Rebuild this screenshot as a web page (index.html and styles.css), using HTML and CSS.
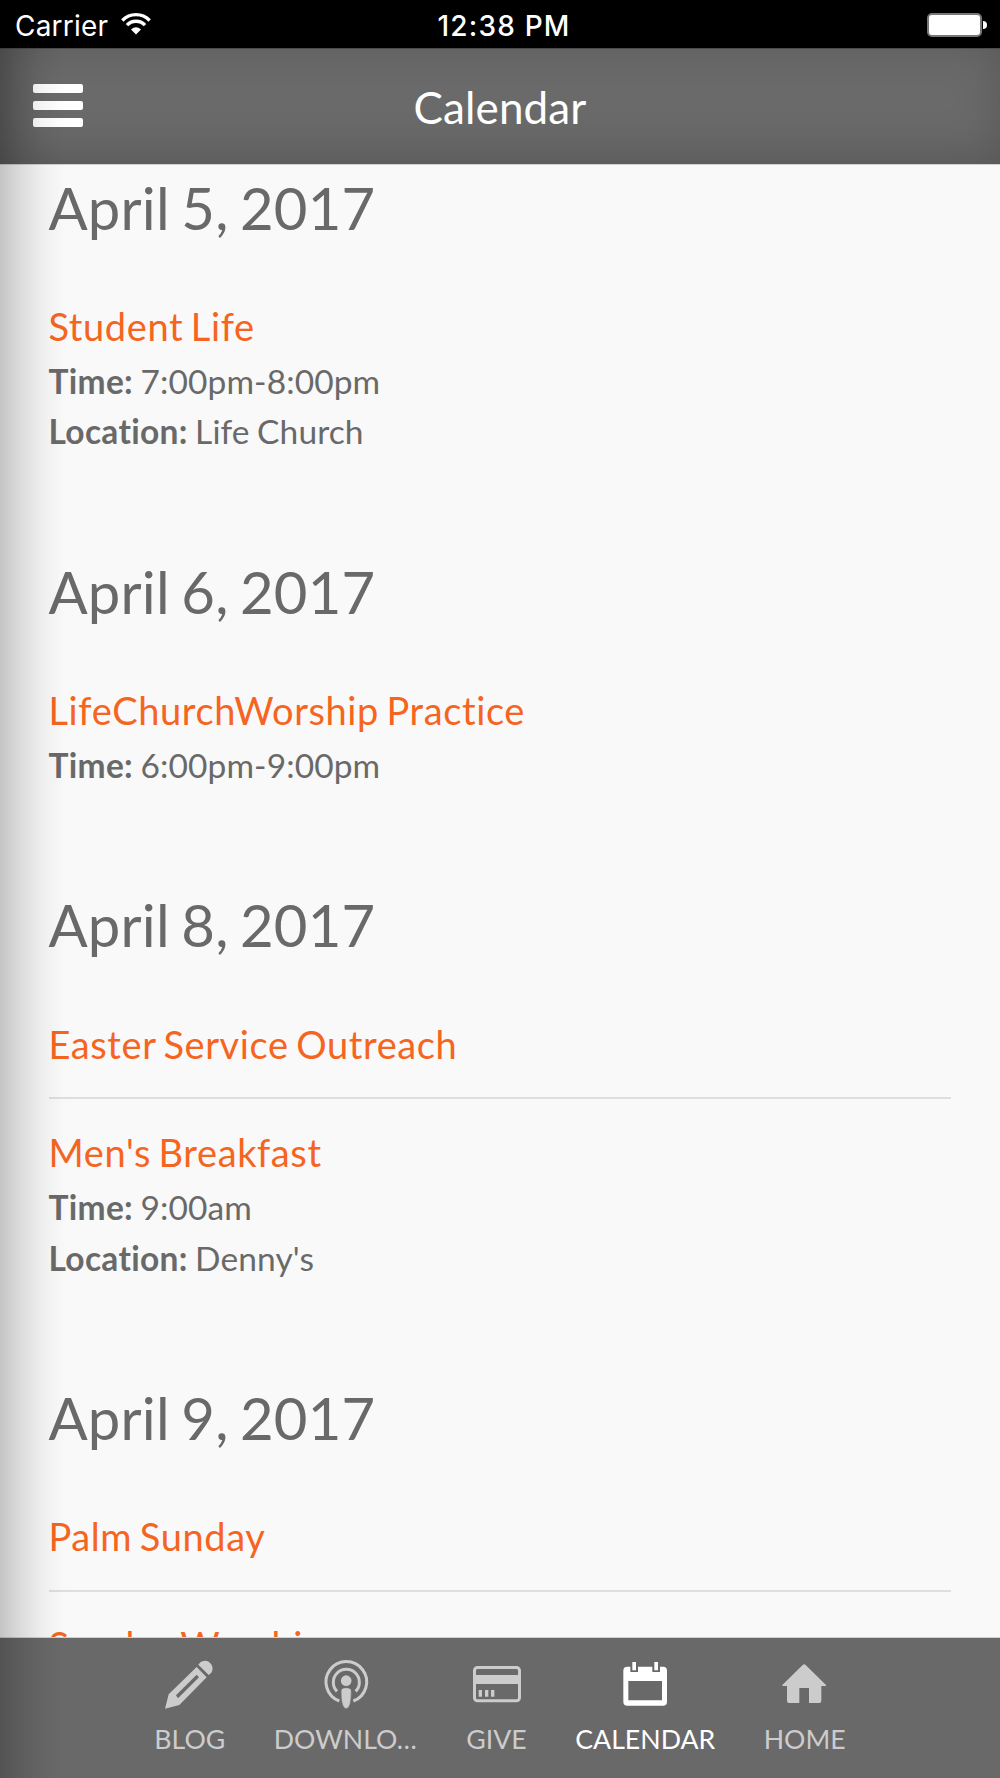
FILE: index.html
```html
<!DOCTYPE html>
<html lang="en">
<head>
    <meta charset="UTF-8">
    <meta name="viewport" content="width=device-width, initial-scale=1.0">
    <title>Calendar</title>
    <link rel="stylesheet" href="styles.css">
</head>
<body>

    <div class="status-bar">
        <div class="carrier">
            <span>Carrier</span>
            <svg class="wifi" viewBox="0 0 90 68">
                <path d="M4 25A57 57 0 0 1 86 25M18 39A37 37 0 0 1 72 39" fill="none" stroke="#fff" stroke-width="10"/>
                <path d="M45 67L30 52Q45 39 60 52Z" fill="#fff"/>
            </svg>
        </div>
        <div class="clock">12:38 PM</div>
        <div class="battery">
            <span class="battery-body"></span>
            <span class="battery-tip"></span>
        </div>
    </div>

    <div class="app">
        <header class="header">
            <div class="menu">
                <span></span>
                <span></span>
                <span></span>
            </div>
            <h1>Calendar</h1>
        </header>

        <main class="content">
            <section class="day">
                <h2>April 5, 2017</h2>
                <div class="event">
                    <h3>Student Life</h3>
                    <p><strong>Time:</strong> 7:00pm-8:00pm</p>
                    <p><strong>Location:</strong> Life Church</p>
                </div>
            </section>

            <section class="day">
                <h2>April 6, 2017</h2>
                <div class="event">
                    <h3>LifeChurchWorship Practice</h3>
                    <p><strong>Time:</strong> 6:00pm-9:00pm</p>
                </div>
            </section>

            <section class="day">
                <h2>April 8, 2017</h2>
                <div class="event">
                    <h3>Easter Service Outreach</h3>
                </div>
                <div class="event">
                    <h3>Men's Breakfast</h3>
                    <p><strong>Time:</strong> 9:00am</p>
                    <p><strong>Location:</strong> Denny's</p>
                </div>
            </section>

            <section class="day">
                <h2>April 9, 2017</h2>
                <div class="event">
                    <h3>Palm Sunday</h3>
                </div>
                <div class="event">
                    <h3>Sunday Worship</h3>
                </div>
            </section>
        </main>

        <nav class="tabs">
            <a class="tab">
                <svg viewBox="0 0 150 150">
                    <path fill-rule="evenodd" d="M0 149L11 106L95 24L125 55L43 138ZM33 109L39 118L102 55L95 47Z"/>
                    <path d="M100 17L106 10A23 23 0 0 1 139 41L131 48Z"/>
                </svg>
                <span>BLOG</span>
            </a>
            <a class="tab">
                <svg viewBox="0 0 150 150">
                    <path class="line" d="M55 126A61 61 0 1 1 97 126M48 97A39 39 0 1 1 104 97"/>
                    <circle cx="75.500" cy="65" r="16"/>
                    <path class="mic" d="M60 96Q60 86 75.500 86Q91 86 91 96Q91 149 75.500 149Q60 149 60 96Z"/>
                </svg>
                <span>DOWNLOADS</span>
            </a>
            <a class="tab">
                <svg viewBox="0 0 150 150">
                    <rect class="line" x="7.500" y="25.500" width="135" height="100" rx="9"/>
                    <path d="M7 48H143V75H7ZM20 93H30V113H20ZM39 93H49V113H39ZM57 93H67V113H57Z"/>
                </svg>
                <span>GIVE</span>
            </a>
            <a class="tab active">
                <svg viewBox="0 0 150 150">
                    <path fill-rule="evenodd" d="M22 23H31V39H54V23H97V39H120V23H129Q141 23 141 35V128Q141 140 129 140H22Q10 140 10 128V35Q10 23 22 23ZM25 66V124H126V66Z"/>
                    <path d="M37 9H48V34H37ZM103 9H114V34H103Z"/>
                </svg>
                <span>CALENDAR</span>
            </a>
            <a class="tab">
                <svg viewBox="0 0 150 150">
                    <path d="M68 18Q72.500 13 77 18L138 78V81H124V126Q124 132 118 132H87V87H58V132H27Q21 132 21 126V81H7V78Z"/>
                </svg>
                <span>HOME</span>
            </a>
        </nav>
    </div>

</body>
</html>
```
FILE: styles.css
```css
* {
    box-sizing: border-box;
}
body {
    font-family: Lato, sans-serif;
    background-color: #f9f9f9;
    color: #696969;
    margin: 0;
    height: 1778px;
    overflow: hidden;
    display: flex;
    flex-direction: column;
}
h1, h2, h3, p {
    margin: 0;
    font-weight: 400;
}

/* status bar */
.status-bar {
    height: 48px;
    flex: none;
    background-color: #000;
    color: #fff;
    font-family: Inter, sans-serif;
    font-size: 28px;
    display: grid;
    grid-template-columns: 1fr auto 1fr;
    align-items: center;
    padding: 3px 13px 0 15px;
}
.carrier {
    display: flex;
    align-items: center;
    gap: 13px;
    letter-spacing: 0.2px;
}
.wifi {
    width: 30px;
    height: 23px;
    margin-top: -4px;
}
.clock {
    font-size: 28px;
    font-weight: 500;
    letter-spacing: 1.2px;
    margin-left: 6px;
}
.battery {
    display: flex;
    align-items: center;
    justify-content: flex-end;
    gap: 1px;
    margin-top: -1px;
}
.battery-body {
    width: 55px;
    height: 24px;
    border: 2px solid #777;
    border-radius: 5px;
    background-color: #fff;
}
.battery-tip {
    width: 4px;
    height: 8px;
    background-color: #fff;
    border-radius: 0 4px 4px 0;
}

/* app */
.app {
    flex: 1;
    min-height: 0;
    position: relative;
    display: flex;
    flex-direction: column;
}
/* shadow cast by the side drawer */
.app::after {
    content: "";
    position: absolute;
    top: 0;
    bottom: 0;
    left: 0;
    width: 66px;
    background: linear-gradient(to right, rgba(0, 0, 0, 0.21), rgba(0, 0, 0, 0.12) 30%, rgba(0, 0, 0, 0.04) 65%, transparent);
}
.header {
    height: 116px;
    flex: none;
    display: grid;
    grid-template-columns: 1fr auto 1fr;
    align-items: center;
    padding: 0 33px;
    background-color: #6a6a6a;
    border-top: 1px solid #4c4c4c;
    box-shadow: inset 0 -8px 46px rgba(0, 0, 0, 0.18), 0 1px 0 #d0d0d0;
    color: #fff;
}
.header h1 {
    font-size: 44px;
    line-height: 56px;
    letter-spacing: 0.1px;
    margin-top: 1px;
}
.menu {
    width: 50px;
    display: flex;
    flex-direction: column;
    gap: 8px;
    margin-top: -2px;
}
.menu span {
    height: 9px;
    border-radius: 2px;
    background-color: #fff;
}

.content {
    flex: 1;
    min-height: 0;
    overflow: hidden;
    padding: 8.6px 49px 0 48.5px;
}
.day {
    margin-bottom: 99.7px;
}
.day h2 {
    font-size: 58px;
    line-height: 70px;
    letter-spacing: 0.2px;
    word-spacing: -3.6px;
    margin-bottom: 57.4px;
}
.event h3 {
    font-size: 38px;
    line-height: 52px;
    letter-spacing: 0.6px;
    word-spacing: -2.7px;
    color: #f5651f;
    margin-bottom: 3.7px;
}
.event h3:last-child {
    margin-bottom: 0;
}
.event p {
    font-size: 33.5px;
    line-height: 50.7px;
    letter-spacing: 0.1px;
    word-spacing: -1.2px;
}
.event strong {
    letter-spacing: 0.3px;
}
.event + .event {
    margin-top: 27.3px;
    padding-top: 27.3px;
    border-top: 2px solid #dedede;
}

/* bottom tabs */
.tabs {
    height: 140px;
    flex: none;
    display: flex;
    justify-content: center;
    gap: 48.5px;
    padding-top: 21px;
    background-color: #696969;
    box-shadow: 0 -1px 0 #d0d0d0;
}
.tab {
    display: flex;
    flex-direction: column;
    align-items: center;
    color: #ccc;
    font-size: 26.7px;
    line-height: 32px;
}
.tab.active {
    color: #fff;
}
.tab svg {
    width: 50px;
    height: 50px;
    margin-bottom: 14px;
    fill: currentColor;
}
.tab .line {
    fill: none;
    stroke: currentColor;
    stroke-width: 9;
}
.tab .mic {
    stroke: #696969;
    stroke-width: 2;
}
.tab span {
    max-width: 144px;
    overflow: hidden;
    text-overflow: ellipsis;
    white-space: nowrap;
}
```
